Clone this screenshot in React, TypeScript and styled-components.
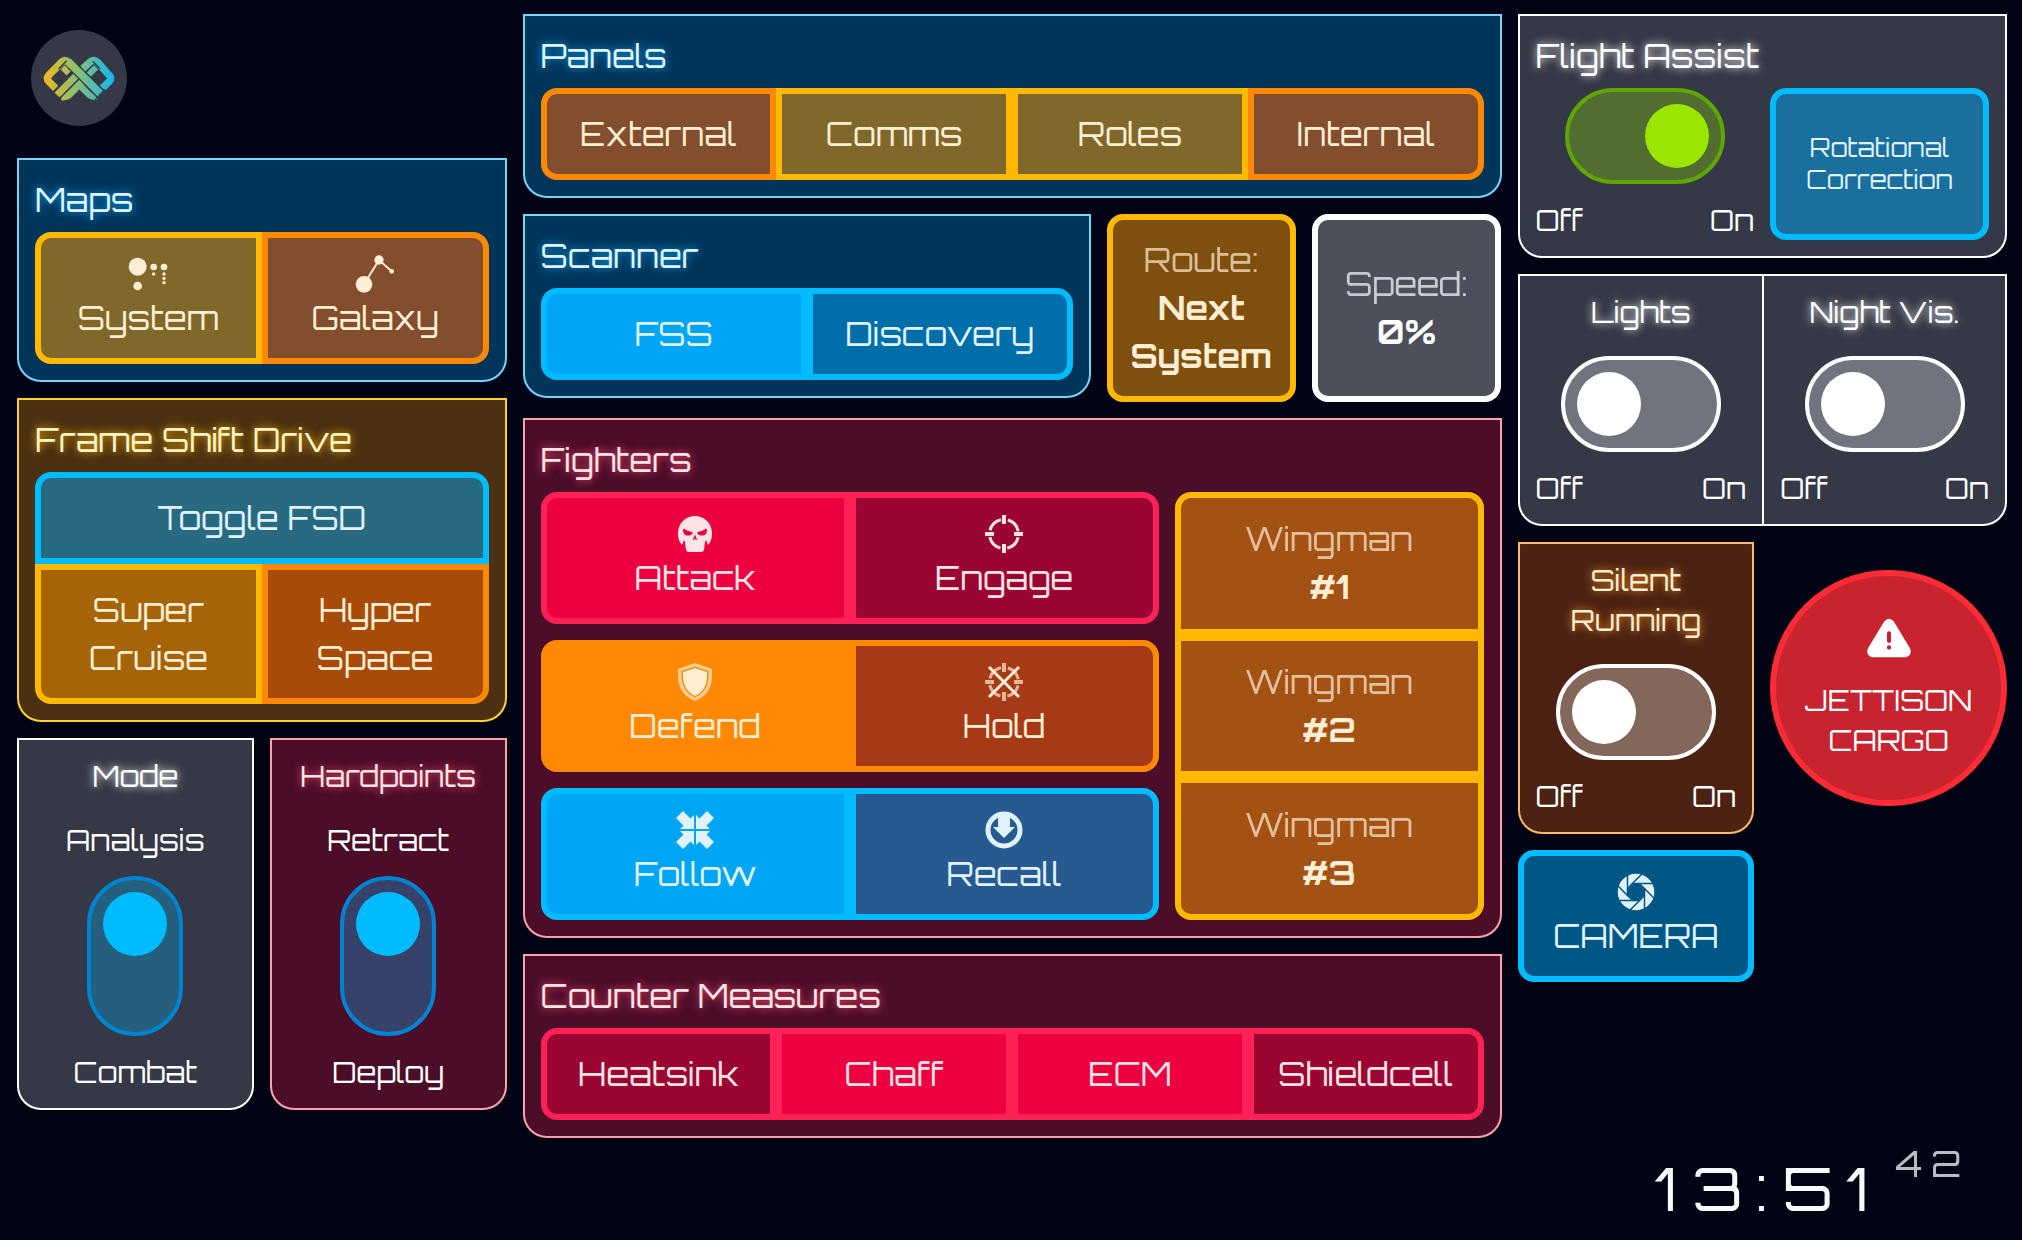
import React, { useId, useState } from "react";
import styled, { createGlobalStyle, css } from "styled-components";

/* ---------- theme ---------- */

const panelTones = {
  sky: { bg: "#00355a", line: "#74d4ff", text: "#dff2fe", glow: "#00a6f4" },
  amber: { bg: "#4b3011", line: "#ffd230", text: "#fef3c6", glow: "#ffb900" },
  slate: { bg: "#353846", line: "#ffffff", text: "#ffffff", glow: "#ffffff" },
  rose: { bg: "#4c0d29", line: "#ffa1ad", text: "#ffe4e6", glow: "#ff4d70" },
  orange: { bg: "#4c2213", line: "#ffb86a", text: "#ffedd4", glow: "#ff9a20" },
};
type PanelTone = keyof typeof panelTones;

const keyTones = {
  amber: { line: "#ffb900", text: "#ffedd4" },
  orange: { line: "#ff8904", text: "#ffedd4" },
  sky: { line: "#00bcff", text: "#dff2fe" },
  rose: { line: "#ff2056", text: "#ffe4e6" },
  white: { line: "#ffffff", text: "#ffffff" },
  red: { line: "#fb2c36", text: "#ffffff" },
};
type KeyTone = keyof typeof keyTones;

const corners = {
  all: "16px",
  left: "16px 0 0 16px",
  right: "0 16px 16px 0",
  top: "16px 16px 0 0",
  bottom: "0 0 16px 16px",
  bottomLeft: "0 0 0 16px",
  bottomRight: "0 0 16px 0",
  none: "0",
};
type Corner = keyof typeof corners;

const largeText = css`
  font-size: 33px;
  line-height: 48px;
`;
const mediumText = css`
  font-size: 29px;
  line-height: 40px;
`;
const smallText = css`
  font-size: 25px;
  line-height: 32px;
`;

const GlobalStyle = createGlobalStyle`
  *, *::before, *::after { box-sizing: border-box; }
  body {
    margin: 0;
    background: #000314;
    color: #ffffff;
    font-family: "Orbitron", "DejaVu Sans", sans-serif;
  }
`;

/* ---------- layout ---------- */

const Page = styled.div`
  min-height: 100vh;
  display: flex;
  flex-direction: column;
`;

const Deck = styled.main`
  display: grid;
  grid-template-columns: minmax(0, 1fr) minmax(0, 2fr) minmax(0, 1fr);
  gap: 16px;
  align-items: start;
  padding: 14px 15px 0 17px;
`;

const Column = styled.div`
  display: flex;
  flex-direction: column;
  gap: 16px;
`;

const Split = styled.div<{ $columns?: string; $align?: string }>`
  display: grid;
  grid-template-columns: ${(p) => p.$columns ?? "1fr 1fr"};
  gap: 16px;
  align-items: ${(p) => p.$align ?? "stretch"};
`;

const KeyGroup = styled.div<{ $columns: number }>`
  display: grid;
  grid-template-columns: repeat(${(p) => p.$columns}, minmax(0, 1fr));
`;

const Wide = styled.div`
  display: grid;
  grid-column: 1 / -1;
`;

const Panel = styled.section<{ $tone: PanelTone }>`
  display: flex;
  flex-direction: column;
  padding: 16px;
  background: ${(p) => panelTones[p.$tone].bg};
  border: 2px solid ${(p) => panelTones[p.$tone].line};
  border-radius: 0 0 24px 24px;
`;

const DoublePanel = styled(Panel)`
  display: grid;
  grid-template-columns: 1fr 1fr;
  padding: 0;
`;

const Half = styled.div`
  display: flex;
  flex-direction: column;
  padding: 16px;

  & + & {
    border-left: 2px solid #ffffff;
  }
`;

const glow = css<{ $tone: PanelTone }>`
  color: ${(p) => panelTones[p.$tone].text};
  text-shadow: 0 0 8px ${(p) => panelTones[p.$tone].glow};
`;

const Title = styled.h2<{ $tone: PanelTone }>`
  margin: 0 0 8px;
  font-weight: 400;
  ${largeText}
  ${glow}
`;

const SwitchTitle = styled.label<{ $tone: PanelTone }>`
  margin-bottom: 24px;
  text-align: center;
  ${mediumText}
  ${glow}
`;

/* ---------- controls ---------- */

const Key = styled.button<{ $tone: KeyTone; $fill: string; $corner?: Corner; $small?: boolean }>`
  display: flex;
  flex-direction: column;
  align-items: center;
  justify-content: center;
  min-width: 0;
  padding: 16px 0;
  border: 6px solid ${(p) => keyTones[p.$tone].line};
  border-radius: ${(p) => corners[p.$corner ?? "all"]};
  background: ${(p) => p.$fill};
  color: ${(p) => keyTones[p.$tone].text};
  font-family: inherit;
  cursor: pointer;
  ${(p) => (p.$small ? smallText : largeText)}
`;

const SquareKey = styled(Key)`
  min-height: 188px;
`;

const RoundKey = styled(Key)`
  aspect-ratio: 1;
  padding: 0;
  border-radius: 50%;
  gap: 20px;
  ${mediumText}
`;

const Muted = styled.span`
  opacity: 0.7;
`;

const Glyph = styled.svg`
  display: block;
  width: 40px;
  height: 40px;
  fill: currentColor;
`;

const LargeGlyph = styled(Glyph)`
  width: 44px;
  height: 44px;
`;

const SwitchInput = styled.input<{ $line: string; $fill: string; $knob: string; $vertical?: boolean }>`
  appearance: none;
  align-self: center;
  display: flex;
  flex-direction: ${(p) => (p.$vertical ? "column-reverse" : "row")};
  width: ${(p) => (p.$vertical ? "96px" : "160px")};
  height: ${(p) => (p.$vertical ? "160px" : "96px")};
  margin: 0;
  padding: 12px;
  border: 4px solid ${(p) => p.$line};
  border-radius: 48px;
  background: ${(p) => p.$fill};
  cursor: pointer;

  &::before {
    content: "";
    width: 64px;
    height: 64px;
    border-radius: 50%;
    background: ${(p) => p.$knob};
  }

  &:checked {
    justify-content: flex-end;
  }
`;

const SwitchEnds = styled.div`
  display: flex;
  justify-content: space-between;
  margin-top: 16px;
  ${mediumText}
`;

const SwitchEnd = styled.div`
  text-align: center;
  ${mediumText}
`;

const VerticalSwitch = styled.div`
  display: flex;
  flex-direction: column;
  gap: 16px;
`;

const HorizontalSwitch = styled.div`
  display: flex;
  flex-direction: column;
`;

const LogoButton = styled.button`
  display: grid;
  width: 96px;
  height: 96px;
  margin: 16px 0 16px 14px;
  padding: 0;
  border: 0;
  border-radius: 50%;
  overflow: hidden;
  background: #353846;
  cursor: pointer;
`;

const Clock = styled.time`
  display: flex;
  justify-content: flex-end;
  align-items: flex-start;
  gap: 12px;
  margin-top: auto;
  padding: 0 52px 16px 0;
  color: #f8fafc;
`;

const Minutes = styled.span`
  padding-top: 12px;
  font-size: 60px;
  line-height: 72px;
  letter-spacing: 14px;
`;

const Seconds = styled.span`
  font-size: 36px;
  line-height: 48px;
  letter-spacing: 9px;
  opacity: 0.75;
`;

/* ---------- icons ---------- */

const Logo = () => (
  <svg viewBox="93 90 288 288" width="96" height="96" fill="none" aria-hidden="true">
    <defs>
      <linearGradient id="brand" gradientUnits="userSpaceOnUse" x1="131" y1="0" x2="343" y2="0">
        <stop offset="0" stopColor="#efb81a" />
        <stop offset="0.45" stopColor="#8fbf70" />
        <stop offset="1" stopColor="#12b8f0" />
      </linearGradient>
    </defs>
    <g stroke="url(#brand)">
      <path strokeWidth="22" d="M167 265 L146 244 Q138 235 146 226 L184 187 Q195 177 206 187 L216 197" />
      <path strokeWidth="22" d="M248 206 L270 186 Q281 177 292 186 L328 226 Q336 235 328 244 L307 265" />
      <path strokeWidth="18" d="M188 202 L206 220" />
      <path strokeWidth="18" d="M288 202 L266 224" />
      <path strokeWidth="22" d="M171 285 L229 227" />
      <path strokeWidth="22" d="M184 290 Q198 291 206 285 L246 245" />
      <path strokeWidth="19" d="M244 261 L268 285 Q279 293 290 289" />
    </g>
    <g stroke="#353846" strokeWidth="4">
      <path d="M158 280 L222 216 M174 300 L240 234" />
      <path d="M176 206 L200 182 M300 206 L278 184" />
    </g>
    <path stroke="#353846" strokeWidth="31" d="M214 194 L308 288" />
    <path stroke="url(#brand)" strokeWidth="23" d="M205 185 L303 283" />
    <path stroke="#353846" strokeWidth="4" d="M285 299 L316 268" />
  </svg>
);

const SystemIcon = () => (
  <Glyph viewBox="387 762 120 120" aria-hidden="true">
    <circle cx="416" cy="800" r="27" />
    <circle cx="416" cy="858" r="13" />
    <circle cx="464" cy="801" r="10" />
    <circle cx="464" cy="822" r="5" />
    <circle cx="495" cy="801" r="10" />
    <circle cx="495" cy="822" r="5" />
    <circle cx="495" cy="835" r="5" />
    <circle cx="495" cy="848" r="5" />
  </Glyph>
);

const GalaxyIcon = () => (
  <Glyph viewBox="1065 762 120 120" aria-hidden="true">
    <path d="M1092 853 L1137 780 L1175 814" fill="none" stroke="currentColor" strokeWidth="6" />
    <circle cx="1092" cy="853" r="25" />
    <circle cx="1137" cy="780" r="14" />
    <circle cx="1175" cy="814" r="7" />
  </Glyph>
);

const SkullIcon = () => (
  <Glyph viewBox="0 0 40 40" aria-hidden="true">
    <path
      fillRule="evenodd"
      d="M20 2 C29 2 37 9 37 19 C37 24 36 28 33 31 L31 26 L30 28 L29 36 Q28.500 38 26 38 H14 Q11.500 38 11 36 L10 28 L9 26 L7 31 C4 28 3 24 3 19 C3 9 11 2 20 2 Z
         M8 15.500 C8 20 10 21.500 13 21.500 C16 21.500 18 20 17.500 18 C14 17.500 11 16.500 9 14.500 Z
         M32 15.500 C32 20 30 21.500 27 21.500 C24 21.500 22 20 22.500 18 C26 17.500 29 16.500 31 14.500 Z
         M20 20.500 L17.800 26 L19 26 L20 24.500 L21 26 L22.200 26 Z"
    />
  </Glyph>
);

const Reticle = ({ opacity = 1 }: { opacity?: number }) => (
  <g fill="none" stroke="currentColor" opacity={opacity}>
    <circle cx="20" cy="20" r="14.500" strokeWidth="3" strokeDasharray="15.780 7" strokeDashoffset="-3.500" />
    <path strokeWidth="4" d="M20 1 V10 M20 30 V39 M1 20 H10 M30 20 H39" />
  </g>
);

const EngageIcon = () => (
  <Glyph viewBox="0 0 40 40" aria-hidden="true">
    <Reticle />
  </Glyph>
);

const HoldIcon = () => (
  <Glyph viewBox="0 0 40 40" aria-hidden="true">
    <Reticle opacity={0.7} />
    <path d="M5 5 L35 35 M35 5 L5 35" stroke="currentColor" strokeWidth="3" />
  </Glyph>
);

const ShieldIcon = () => (
  <Glyph viewBox="0 0 40 40" aria-hidden="true">
    <path
      fillRule="evenodd"
      opacity="0.7"
      d="M20 1 L37 7 V14 C37 27 30 35 20 39 C10 35 3 27 3 14 V7 Z
         M20 4.500 L6.500 9 V14 C6.500 25 12 32 20 35.500 C28 32 33.500 25 33.500 14 V9 Z"
    />
    <path d="M20 6 L32 10 V14 C32 24 27 31 20 34 C13 31 8 24 8 14 V10 Z" />
  </Glyph>
);

const arrowIn = "M19 5 V19 H5 L8.500 15.500 L1 8 L8 1 L15.500 8.500 Z";

const FollowIcon = () => (
  <Glyph viewBox="0 0 40 40" aria-hidden="true">
    {[0, 90, 180, 270].map((a) => (
      <path key={a} d={arrowIn} transform={`rotate(${a} 20 20)`} />
    ))}
  </Glyph>
);

const RecallIcon = () => (
  <Glyph viewBox="0 0 40 40" aria-hidden="true">
    <circle cx="20" cy="20" r="16" fill="none" stroke="currentColor" strokeWidth="5" />
    <path d="M14 4 H26 V17 H31 L20 28 L9 17 H14 Z" />
  </Glyph>
);

const ApertureIcon = () => (
  <Glyph viewBox="-20 -20 40 40" aria-hidden="true">
    <mask id="blades" maskUnits="userSpaceOnUse" x="-20" y="-20" width="40" height="40">
      <circle r="18.500" fill="#fff" />
      <path d="M-3.300 -8 H3.300 L8 -3.300 V3.300 L3.300 8 H-3.300 L-8 3.300 V-3.300 Z" fill="#000" />
      {[0, 1, 2, 3, 4, 5, 6, 7].map((k) => (
        <path key={k} d="M-4 -8.500 H19" stroke="#000" strokeWidth="1.500" transform={`rotate(${k * 45})`} />
      ))}
    </mask>
    <circle r="18.500" mask="url(#blades)" />
  </Glyph>
);

const WarningIcon = () => (
  <LargeGlyph viewBox="0 0 132 132" aria-hidden="true">
    <path
      fillRule="evenodd"
      d="M52 16 Q66 0 80 16 L129 97 Q137 117 117 124 H15 Q-5 117 3 97 Z
         M66 46 Q60 46 60 52 V75 Q60 81 66 81 Q72 81 72 75 V52 Q72 46 66 46 Z
         M66 88 A6.500 6.500 0 1 0 66 101 A6.500 6.500 0 1 0 66 88 Z"
    />
  </LargeGlyph>
);

/* ---------- switches ---------- */

const switchColors = {
  lime: { $line: "#5ea500", $fill: "#516d30", $knob: "#9ae600" },
  slate: { $line: "#ffffff", $fill: "#71747e", $knob: "#ffffff" },
  brown: { $line: "#ffffff", $fill: "#84675b", $knob: "#ffffff" },
  teal: { $line: "#0084d1", $fill: "#245f7d", $knob: "#00bcff" },
  indigo: { $line: "#0084d1", $fill: "#364269", $knob: "#00bcff" },
};
type SwitchColor = keyof typeof switchColors;

interface SwitchProps {
  id: string;
  color: SwitchColor;
  initial?: boolean;
}

const OnOff = ({ id, color, initial = false }: SwitchProps) => {
  const [on, setOn] = useState(initial);
  return (
    <HorizontalSwitch>
      <SwitchInput
        id={id}
        type="checkbox"
        checked={on}
        onChange={(e) => setOn(e.target.checked)}
        {...switchColors[color]}
      />
      <SwitchEnds>
        <span>Off</span>
        <span>On</span>
      </SwitchEnds>
    </HorizontalSwitch>
  );
};

const UpDown = ({ id, color, up, down }: SwitchProps & { up: string; down: string }) => {
  const [on, setOn] = useState(true);
  return (
    <VerticalSwitch>
      <SwitchEnd>{up}</SwitchEnd>
      <SwitchInput
        id={id}
        type="checkbox"
        $vertical
        checked={on}
        onChange={(e) => setOn(e.target.checked)}
        {...switchColors[color]}
      />
      <SwitchEnd>{down}</SwitchEnd>
    </VerticalSwitch>
  );
};

/* ---------- columns ---------- */

const Navigation = () => {
  const id = useId();
  return (
    <Column>
      <LogoButton type="button" aria-label="Menu">
        <Logo />
      </LogoButton>
      <Panel $tone="sky">
        <Title $tone="sky">Maps</Title>
        <KeyGroup $columns={2}>
          <Key $tone="amber" $fill="#7f682a" $corner="left">
            <SystemIcon />
            System
          </Key>
          <Key $tone="orange" $fill="#834e2d" $corner="right">
            <GalaxyIcon />
            Galaxy
          </Key>
        </KeyGroup>
      </Panel>
      <Panel $tone="amber">
        <Title $tone="amber">Frame Shift Drive</Title>
        <KeyGroup $columns={2}>
          <Wide>
            <Key $tone="sky" $fill="#286b81" $corner="top">Toggle FSD</Key>
          </Wide>
          <Key $tone="amber" $fill="#a56407" $corner="bottomLeft">
            <span>Super</span>
            <span>Cruise</span>
          </Key>
          <Key $tone="orange" $fill="#a74b08" $corner="bottomRight">
            <span>Hyper</span>
            <span>Space</span>
          </Key>
        </KeyGroup>
      </Panel>
      <Split>
        <Panel $tone="slate">
          <SwitchTitle $tone="slate" htmlFor={`${id}mode`}>Mode</SwitchTitle>
          <UpDown id={`${id}mode`} color="teal" up="Analysis" down="Combat" />
        </Panel>
        <Panel $tone="rose">
          <SwitchTitle $tone="rose" htmlFor={`${id}hard`}>Hardpoints</SwitchTitle>
          <UpDown id={`${id}hard`} color="indigo" up="Retract" down="Deploy" />
        </Panel>
      </Split>
    </Column>
  );
};

const wingmen: { name: string; corner: Corner }[] = [
  { name: "#1", corner: "top" },
  { name: "#2", corner: "none" },
  { name: "#3", corner: "bottom" },
];

const Operations = () => (
  <Column>
    <Panel $tone="sky">
      <Title $tone="sky">Panels</Title>
      <KeyGroup $columns={4}>
        <Key $tone="orange" $fill="#834e2d" $corner="left">External</Key>
        <Key $tone="amber" $fill="#7f682a" $corner="none">Comms</Key>
        <Key $tone="amber" $fill="#7f682a" $corner="none">Roles</Key>
        <Key $tone="orange" $fill="#834e2d" $corner="right">Internal</Key>
      </KeyGroup>
    </Panel>
    <Split $columns="minmax(0, 3fr) minmax(0, 1fr) minmax(0, 1fr)" $align="start">
      <Panel $tone="sky">
        <Title $tone="sky">Scanner</Title>
        <KeyGroup $columns={2}>
          <Key $tone="sky" $fill="#00a6f4" $corner="left">FSS</Key>
          <Key $tone="sky" $fill="#006ea8" $corner="right">Discovery</Key>
        </KeyGroup>
      </Panel>
      <SquareKey $tone="amber" $fill="#7f4f0d">
        <Muted>Route:</Muted>
        <b>Next</b>
        <b>System</b>
      </SquareKey>
      <SquareKey $tone="white" $fill="#4d505c">
        <Muted>Speed:</Muted>
        <b>0%</b>
      </SquareKey>
    </Split>
    <Panel $tone="rose">
      <Title $tone="rose">Fighters</Title>
      <Split $columns="minmax(0, 2fr) minmax(0, 1fr)">
        <Column>
          <KeyGroup $columns={2}>
            <Key $tone="rose" $fill="#ec003f" $corner="left">
              <SkullIcon />
              Attack
            </Key>
            <Key $tone="rose" $fill="#9b0532" $corner="right">
              <EngageIcon />
              Engage
            </Key>
          </KeyGroup>
          <KeyGroup $columns={2}>
            <Key $tone="orange" $fill="#ff8904" $corner="left">
              <ShieldIcon />
              Defend
            </Key>
            <Key $tone="orange" $fill="#a63916" $corner="right">
              <HoldIcon />
              Hold
            </Key>
          </KeyGroup>
          <KeyGroup $columns={2}>
            <Key $tone="sky" $fill="#00a6f4" $corner="left">
              <FollowIcon />
              Follow
            </Key>
            <Key $tone="sky" $fill="#275a90" $corner="right">
              <RecallIcon />
              Recall
            </Key>
          </KeyGroup>
        </Column>
        <KeyGroup $columns={1}>
          {wingmen.map((w) => (
            <Key key={w.name} $tone="amber" $fill="#a35213" $corner={w.corner}>
              <Muted>Wingman</Muted>
              <b>{w.name}</b>
            </Key>
          ))}
        </KeyGroup>
      </Split>
    </Panel>
    <Panel $tone="rose">
      <Title $tone="rose">Counter Measures</Title>
      <KeyGroup $columns={4}>
        <Key $tone="rose" $fill="#9b0532" $corner="left">Heatsink</Key>
        <Key $tone="rose" $fill="#ec003f" $corner="none">Chaff</Key>
        <Key $tone="rose" $fill="#ec003f" $corner="none">ECM</Key>
        <Key $tone="rose" $fill="#9b0532" $corner="right">Shieldcell</Key>
      </KeyGroup>
    </Panel>
  </Column>
);

const Ship = () => {
  const id = useId();
  return (
    <Column>
      <Panel $tone="slate">
        <Title $tone="slate">
          <label htmlFor={`${id}assist`}>Flight Assist</label>
        </Title>
        <Split>
          <OnOff id={`${id}assist`} color="lime" initial />
          <Key $tone="sky" $fill="#1b6f9d" $small>
            <span>Rotational</span>
            <span>Correction</span>
          </Key>
        </Split>
      </Panel>
      <DoublePanel $tone="slate">
        <Half>
          <SwitchTitle $tone="slate" htmlFor={`${id}lights`}>Lights</SwitchTitle>
          <OnOff id={`${id}lights`} color="slate" />
        </Half>
        <Half>
          <SwitchTitle $tone="slate" htmlFor={`${id}night`}>Night Vis.</SwitchTitle>
          <OnOff id={`${id}night`} color="slate" />
        </Half>
      </DoublePanel>
      <Split $align="center">
        <Panel $tone="orange">
          <SwitchTitle $tone="orange" htmlFor={`${id}silent`}>
            Silent
            <br />
            Running
          </SwitchTitle>
          <OnOff id={`${id}silent`} color="brown" />
        </Panel>
        <RoundKey $tone="red" $fill="#c8242f">
          <WarningIcon />
          <span>
            JETTISON
            <br />
            CARGO
          </span>
        </RoundKey>
        <Key $tone="sky" $fill="#005685">
          <ApertureIcon />
          CAMERA
        </Key>
      </Split>
    </Column>
  );
};

export default function App() {
  return (
    <Page>
      <GlobalStyle />
      <Deck>
        <Navigation />
        <Operations />
        <Ship />
      </Deck>
      <Clock>
        <Minutes>13:51</Minutes>
        <Seconds>42</Seconds>
      </Clock>
    </Page>
  );
}
